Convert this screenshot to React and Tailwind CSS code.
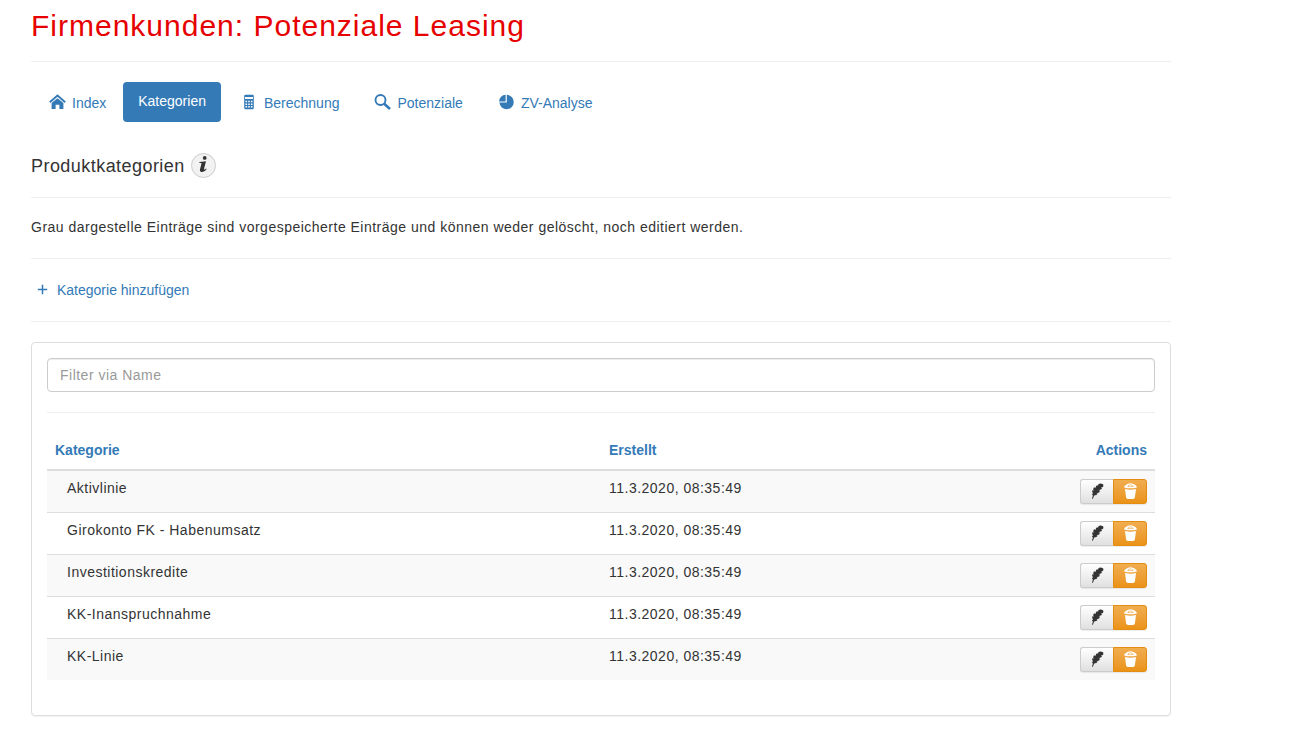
import { useState } from "react";

const rows = [
  "Aktivlinie",
  "Girokonto FK - Habenumsatz",
  "Investitionskredite",
  "KK-Inanspruchnahme",
  "KK-Linie",
].map((name) => ({ name, created: "11.3.2020, 08:35:49" }));

function HomeIcon() {
  return (
    <svg aria-hidden="true" className="h-4 w-[17px]" viewBox="0 0 17 16">
      <path d="M.8 8.2 8.5 1.6 16.2 8.2" fill="none" stroke="currentColor" strokeWidth="1.9" />
      <path d="M2.6 9 8.5 4.2 14.4 9V15h-4v-4.2H6.6V15h-4z" fill="currentColor" />
    </svg>
  );
}

function CalculatorIcon() {
  return (
    <svg aria-hidden="true" className="h-4 w-[17px]" viewBox="-3 0 17 16">
      <path
        fill="currentColor"
        fillRule="evenodd"
        d="M1.5 .8h7q1.3 0 1.3 1.2v12q0 1.2-1.3 1.2h-7Q.2 15.2.2 14V2Q.2.8 1.5.8zM1 3v2h8V3zM1.5 6.7v1.5h1.6V6.7zM4.2 6.7v1.5h1.6V6.7zM6.9 6.7v1.5h1.6V6.7zM1.5 9.4v1.5h1.6V9.4zM4.2 9.4v1.5h1.6V9.4zM6.9 9.4v1.5h1.6V9.4zM1.5 12.1v1.5h1.6v-1.5zM4.2 12.1v1.5h1.6v-1.5zM6.9 12.1v1.5h1.6v-1.5z"
      />
    </svg>
  );
}

function SearchIcon() {
  return (
    <svg aria-hidden="true" className="h-4 w-[17px]" viewBox="0 0 17 16">
      <circle cx="6.5" cy="6" r="5" fill="none" stroke="currentColor" strokeWidth="1.9" />
      <path d="M10.2 9.7 16 15" fill="none" stroke="currentColor" strokeWidth="2.6" />
    </svg>
  );
}

function PieIcon() {
  return (
    <svg aria-hidden="true" className="h-4 w-[17px]" viewBox="0 0 17 16">
      <path d="M8.8 .8A7.2 7.2 0 1 1 1.4 8.6H8.8z" fill="currentColor" />
      <path d="M7.6 .8v6.6H1.1A7 7 0 0 1 7.6 .8z" fill="currentColor" />
    </svg>
  );
}

function PlusIcon() {
  return (
    <svg aria-hidden="true" className="h-[13px] w-[11px]" viewBox="0 0 11 13">
      <path d="M5.5 .8v9.4M.8 5.5h9.4" fill="none" stroke="currentColor" strokeWidth="1.5" />
    </svg>
  );
}

function InfoIcon() {
  return (
    <svg aria-hidden="true" className="h-[18px] w-[10px]" viewBox="0 0 10 18">
      <circle cx="6.7" cy="1.9" r="1.9" fill="currentColor" />
      <path
        fill="currentColor"
        d="M1.6 6 8 5.2 6.1 12.4q-.3 1.5.5 1.2.7-.2 1.4-1.2l.7.6Q7 16 4.2 16 1.4 16 2 13.2L3.5 7.6Q3.7 6.9 2.8 6.9H1.3z"
      />
    </svg>
  );
}

function FeatherIcon() {
  return (
    <svg aria-hidden="true" className="h-[18px] w-[13px]" viewBox="0 0 13 18">
      <path
        fill="currentColor"
        d="M11.9 1.2Q9.6-.2 7.6 1L6.9 3 6.2 1.9Q4.4 3.2 4.6 5L3.1 4.3Q1.8 5.8 2.6 7.8L1.2 7.3Q.9 9.2 2.1 10.4L.9 11q.2 1 1 1.4L1 15.8h.9L3.2 12.5Q5.8 12.3 6.7 10.8L5.4 10.3 8.2 9.4 9 7.6 7.5 7.3 10.4 6.3 11 5.2 9.8 4.8Q11.8 4.5 12.3 3.3 12.6 2 11.9 1.2z"
      />
    </svg>
  );
}

function TrashIcon() {
  return (
    <svg aria-hidden="true" className="h-[18px] w-[13px]" viewBox="0 0 13 18">
      <path
        fill="currentColor"
        fillRule="evenodd"
        d="M.2 3.5Q1.6 1.8 3.6 1.1 6.5-.5 9.4 1.1q2 .7 3.4 2.4v.9Q6.5 6.2.2 4.4zM3.2 3.5q3.3 1 6.6 0Q8.5 1.6 6.5 1.6T3.2 3.5z"
      />
      <path d="M4.6 2.9h3.8" stroke="currentColor" strokeWidth="1.2" />
      <path fill="currentColor" d="M1 6q5.5 1.4 11 0l-1.1 8.6q-.2 1.4-1.9 1.4H4q-1.7 0-1.9-1.4z" />
    </svg>
  );
}

const tabs = [
  { label: "Index", icon: HomeIcon },
  { label: "Kategorien" },
  { label: "Berechnung", icon: CalculatorIcon },
  { label: "Potenziale", icon: SearchIcon },
  { label: "ZV-Analyse", icon: PieIcon },
];

function Rule() {
  return <hr className="my-5 border-[#eee]" />;
}

function Tab({ label, icon: Icon }) {
  if (!Icon) {
    return (
      <a
        href="#kategorien"
        aria-current="page"
        className="flex h-10 items-center rounded bg-[#337ab7] px-[15px] pb-[2px] text-white"
      >
        {label}
      </a>
    );
  }
  return (
    <a
      href={"#" + label.toLowerCase()}
      className="flex h-10 items-center gap-[6px] pr-[15px] pl-[18px] text-[#337ab7]"
    >
      <Icon />
      <span className="pt-[2px]">{label}</span>
    </a>
  );
}

export default function App() {
  const [filter, setFilter] = useState("");
  const visible = rows.filter((r) => r.name.toLowerCase().includes(filter.toLowerCase()));

  return (
    <div className="bg-white px-[31px] pt-[10px] pb-[15px] font-['Liberation_Sans',Arial,sans-serif] text-[14px] leading-5 text-[#333]">
      <main className="max-w-[1140px]">
        <h1 className="text-[30px] leading-[31px] tracking-[1px] text-[#e60000]">
          Firmenkunden: Potenziale Leasing
        </h1>
        <Rule />
        <nav className="flex flex-wrap gap-[2px]">
          {tabs.map((tab) => (
            <Tab key={tab.label} {...tab} />
          ))}
        </nav>

        <div className="mt-[30px] flex items-center gap-[6px]">
          <h2 className="pt-[3px] text-[18px] leading-[23px] tracking-wide">Produktkategorien</h2>
          <button
            type="button"
            aria-label="Information"
            className="flex h-[25px] w-[25px] items-center justify-center rounded-full border border-[#ccc] bg-[#f2f2f2]"
          >
            <InfoIcon />
          </button>
        </div>
        <hr className="my-[19px] border-[#eee]" />
        <p className="mb-[21px] tracking-[0.035em]">
          Grau dargestelle Einträge sind vorgespeicherte Einträge und können weder gelöscht, noch editiert werden.
        </p>
        <Rule />
        <button type="button" className="flex h-[22px] items-center gap-[9px] px-[6px] text-[#337ab7]">
          <PlusIcon />
          Kategorie hinzufügen
        </button>
        <Rule />

        <section className="rounded border border-[#ddd] px-[15px] pt-[15px] pb-[35px] shadow-[0_1px_1px_rgba(0,0,0,0.05)]">
          <input
            type="text"
            aria-label="Filter via Name"
            placeholder="Filter via Name"
            value={filter}
            onChange={(e) => setFilter(e.target.value)}
            className="block h-[34px] w-full rounded border border-[#ccc] bg-white px-3 tracking-[0.035em] shadow-[inset_0_1px_1px_rgba(0,0,0,0.075)] placeholder:text-[#999]"
          />
          <Rule />
          <table className="w-full table-fixed border-collapse text-left">
            <thead className="text-[#337ab7]">
              <tr className="border-b-2 border-[#ddd]">
                <th className="w-1/2 px-2 pt-[7px] pb-[9px] font-bold">Kategorie</th>
                <th className="w-1/4 px-2 pt-[7px] pb-[9px] font-bold">Erstellt</th>
                <th className="w-1/4 px-2 pt-[7px] pb-[9px] text-right font-bold">Actions</th>
              </tr>
            </thead>
            <tbody>
              {visible.map((row) => (
                <tr key={row.name} className="border-t border-[#ddd] align-top tracking-[0.035em] odd:bg-[#f9f9f9]">
                  <td className="pt-[7px] pr-2 pb-2 pl-5">{row.name}</td>
                  <td className="px-2 pt-[7px] pb-2">{row.created}</td>
                  <td className="p-2">
                    <div className="flex justify-end">
                      <button
                        type="button"
                        aria-label={row.name + " bearbeiten"}
                        className="flex h-[25px] w-[33px] items-center justify-center rounded-l-[3px] border border-r-0 border-[#ccc] bg-linear-to-b from-white to-[#e0e0e0] shadow-[0_1px_1px_rgba(0,0,0,0.075)]"
                      >
                        <FeatherIcon />
                      </button>
                      <button
                        type="button"
                        aria-label={row.name + " löschen"}
                        className="flex h-[25px] w-[34px] items-center justify-center rounded-r-[3px] border border-[#e38d13] bg-linear-to-b from-[#f0ad4e] to-[#eb9316] text-white shadow-[0_1px_1px_rgba(0,0,0,0.075)]"
                      >
                        <TrashIcon />
                      </button>
                    </div>
                  </td>
                </tr>
              ))}
            </tbody>
          </table>
        </section>
      </main>
    </div>
  );
}
